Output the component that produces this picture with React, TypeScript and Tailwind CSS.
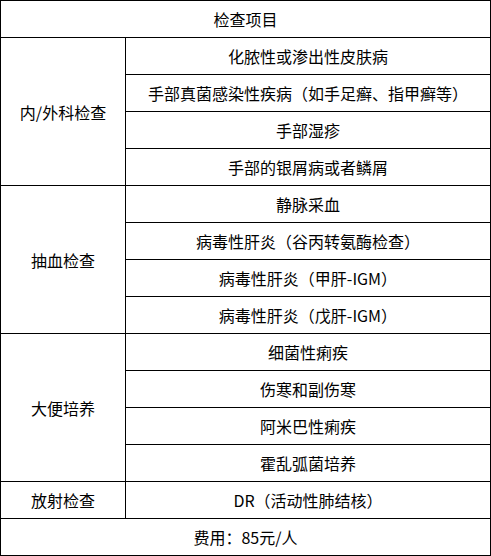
const groups = [
  {
    name: "内/外科检查",
    items: [
      "化脓性或渗出性皮肤病",
      "手部真菌感染性疾病（如手足癣、指甲癣等）",
      "手部湿疹",
      "手部的银屑病或者鳞屑",
    ],
  },
  {
    name: "抽血检查",
    items: [
      "静脉采血",
      "病毒性肝炎（谷丙转氨酶检查）",
      "病毒性肝炎（甲肝-IGM）",
      "病毒性肝炎（戊肝-IGM）",
    ],
  },
  {
    name: "大便培养",
    items: ["细菌性痢疾", "伤寒和副伤寒", "阿米巴性痢疾", "霍乱弧菌培养"],
  },
  {
    name: "放射检查",
    items: ["DR（活动性肺结核）"],
  },
];

export default function App() {
  return (
    <div className="bg-white w-[491px] h-[556px] text-black text-[16px] font-['Noto_Sans_CJK_SC',sans-serif]">
      <table className="w-[491px] border-collapse table-fixed">
        <colgroup>
          <col className="w-[125px]" />
          <col />
        </colgroup>
        <tbody>
          <tr>
            <td colSpan={2} className="h-[37px] border border-black text-center p-0 leading-none">
              检查项目
            </td>
          </tr>
          {groups.map((g) =>
            g.items.map((item, i) => (
              <tr key={g.name + i}>
                {i === 0 && (
                  <td
                    rowSpan={g.items.length}
                    className="border border-black text-center p-0 leading-none"
                  >
                    {g.name}
                  </td>
                )}
                <td className="h-[37px] border border-black text-center p-0 leading-none">
                  {item}
                </td>
              </tr>
            )),
          )}
          <tr>
            <td colSpan={2} className="h-[37px] border border-black text-center p-0 leading-none">
              费用：85元/人
            </td>
          </tr>
        </tbody>
      </table>
    </div>
  );
}
